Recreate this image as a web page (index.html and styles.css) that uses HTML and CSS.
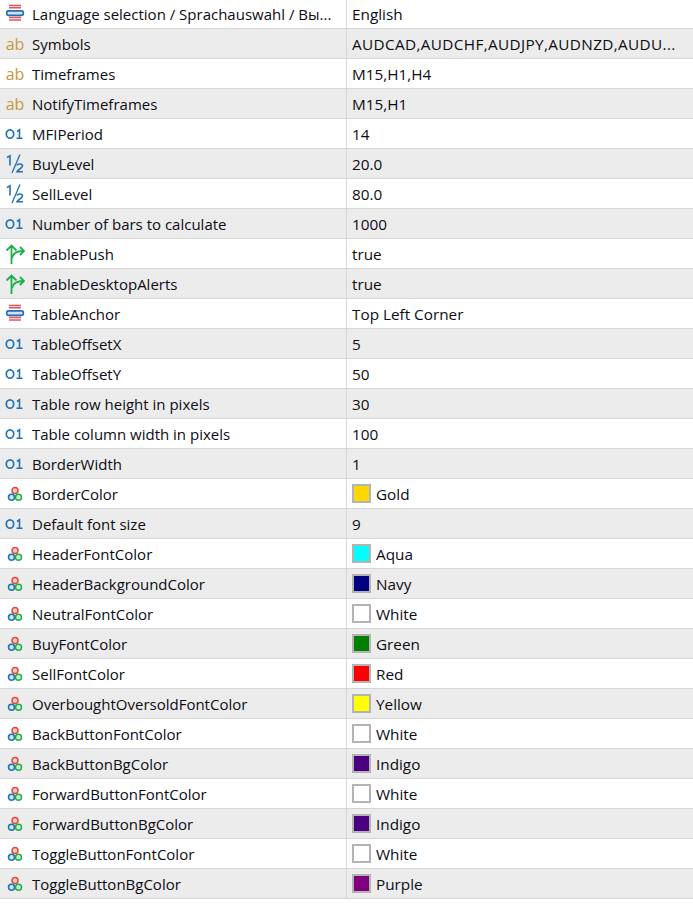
FILE: index.html
```html
<!DOCTYPE html>
<html lang="en">
<head>
<meta charset="utf-8">
<title>Inputs</title>
<link rel="stylesheet" href="styles.css">
</head>
<body>
<svg class="defs" width="0" height="0" aria-hidden="true">
<symbol id="i-enum" viewBox="0 0 20 20">
<path d="M4 1.500h12M4 3.800h12M4 13.500h12M4 16h12" stroke="#e4535c" stroke-width="1.400" fill="none"/>
<rect x="1.700" y="6.800" width="16.600" height="4.600" rx="1.800" fill="#cfe0f0" stroke="#1f6fb5" stroke-width="1.700"/>
</symbol>
<symbol id="i-int" viewBox="0 0 20 20">
<ellipse cx="5" cy="10" rx="3.700" ry="4.200" fill="none" stroke="#2272b4" stroke-width="1.700"/>
<path d="M12 7.500l2.500-1.700V14.200M11.500 14.200h6" fill="none" stroke="#2272b4" stroke-width="1.600"/>
</symbol>
<symbol id="i-dbl" viewBox="0 0 20 20">
<path d="M2 3.500l3-1.600V11.500" fill="none" stroke="#2272b4" stroke-width="1.600"/>
<path d="M15 .5L7 19" fill="none" stroke="#2272b4" stroke-width="1.300"/>
<path d="M12 11.500c.6-2 5.500-2 5.500 .6 0 2-3.800 2.800-5.500 5.600h6" fill="none" stroke="#2272b4" stroke-width="1.600"/>
</symbol>
<symbol id="i-bool" viewBox="0 0 20 20">
<path d="M6.500 20V1.500M1.500 6.500l5-5 5 5" fill="none" stroke="#1cb04a" stroke-width="1.800"/>
<path d="M7 14c1-4.500 4.500-7 11.500-7M15 3l4 4-4 4" fill="none" stroke="#1cb04a" stroke-width="1.800"/>
</symbol>
<symbol id="i-color" viewBox="0 0 20 20">
<circle cx="10" cy="6.500" r="3" fill="#f8cfc9" stroke="#e2483d" stroke-width="1.500"/>
<circle cx="6.500" cy="13.300" r="3" fill="#cfe3f5" stroke="#1f6fb5" stroke-width="1.500"/>
<circle cx="13.500" cy="13.300" r="3" fill="#cdeed6" stroke="#1cb04a" stroke-width="1.500"/>
</symbol>
</svg>
<main class="list">
<div class="row"><div class="name"><svg class="icon"><use href="#i-enum"/></svg><span>Language selection / Sprachauswahl / Вы...</span></div><div class="val">English</div></div>
<div class="row"><div class="name"><span class="ab">ab</span><span>Symbols</span></div><div class="val wide">AUDCAD,AUDCHF,AUDJPY,AUDNZD,AUDU...</div></div>
<div class="row"><div class="name"><span class="ab">ab</span><span>Timeframes</span></div><div class="val">M15,H1,H4</div></div>
<div class="row"><div class="name"><span class="ab">ab</span><span>NotifyTimeframes</span></div><div class="val">M15,H1</div></div>
<div class="row"><div class="name"><svg class="icon"><use href="#i-int"/></svg><span>MFIPeriod</span></div><div class="val">14</div></div>
<div class="row"><div class="name"><svg class="icon"><use href="#i-dbl"/></svg><span>BuyLevel</span></div><div class="val">20.0</div></div>
<div class="row"><div class="name"><svg class="icon"><use href="#i-dbl"/></svg><span>SellLevel</span></div><div class="val">80.0</div></div>
<div class="row"><div class="name"><svg class="icon"><use href="#i-int"/></svg><span>Number of bars to calculate</span></div><div class="val">1000</div></div>
<div class="row"><div class="name"><svg class="icon"><use href="#i-bool"/></svg><span>EnablePush</span></div><div class="val">true</div></div>
<div class="row"><div class="name"><svg class="icon"><use href="#i-bool"/></svg><span>EnableDesktopAlerts</span></div><div class="val">true</div></div>
<div class="row"><div class="name"><svg class="icon"><use href="#i-enum"/></svg><span>TableAnchor</span></div><div class="val">Top Left Corner</div></div>
<div class="row"><div class="name"><svg class="icon"><use href="#i-int"/></svg><span>TableOffsetX</span></div><div class="val">5</div></div>
<div class="row"><div class="name"><svg class="icon"><use href="#i-int"/></svg><span>TableOffsetY</span></div><div class="val">50</div></div>
<div class="row"><div class="name"><svg class="icon"><use href="#i-int"/></svg><span>Table row height in pixels</span></div><div class="val">30</div></div>
<div class="row"><div class="name"><svg class="icon"><use href="#i-int"/></svg><span>Table column width in pixels</span></div><div class="val">100</div></div>
<div class="row"><div class="name"><svg class="icon"><use href="#i-int"/></svg><span>BorderWidth</span></div><div class="val">1</div></div>
<div class="row"><div class="name"><svg class="icon"><use href="#i-color"/></svg><span>BorderColor</span></div><div class="val"><i class="sw gold"></i>Gold</div></div>
<div class="row"><div class="name"><svg class="icon"><use href="#i-int"/></svg><span>Default font size</span></div><div class="val">9</div></div>
<div class="row"><div class="name"><svg class="icon"><use href="#i-color"/></svg><span>HeaderFontColor</span></div><div class="val"><i class="sw aqua"></i>Aqua</div></div>
<div class="row"><div class="name"><svg class="icon"><use href="#i-color"/></svg><span>HeaderBackgroundColor</span></div><div class="val"><i class="sw navy"></i>Navy</div></div>
<div class="row"><div class="name"><svg class="icon"><use href="#i-color"/></svg><span>NeutralFontColor</span></div><div class="val"><i class="sw white"></i>White</div></div>
<div class="row"><div class="name"><svg class="icon"><use href="#i-color"/></svg><span>BuyFontColor</span></div><div class="val"><i class="sw green"></i>Green</div></div>
<div class="row"><div class="name"><svg class="icon"><use href="#i-color"/></svg><span>SellFontColor</span></div><div class="val"><i class="sw red"></i>Red</div></div>
<div class="row"><div class="name"><svg class="icon"><use href="#i-color"/></svg><span>OverboughtOversoldFontColor</span></div><div class="val"><i class="sw yellow"></i>Yellow</div></div>
<div class="row"><div class="name"><svg class="icon"><use href="#i-color"/></svg><span>BackButtonFontColor</span></div><div class="val"><i class="sw white"></i>White</div></div>
<div class="row"><div class="name"><svg class="icon"><use href="#i-color"/></svg><span>BackButtonBgColor</span></div><div class="val"><i class="sw indigo"></i>Indigo</div></div>
<div class="row"><div class="name"><svg class="icon"><use href="#i-color"/></svg><span>ForwardButtonFontColor</span></div><div class="val"><i class="sw white"></i>White</div></div>
<div class="row"><div class="name"><svg class="icon"><use href="#i-color"/></svg><span>ForwardButtonBgColor</span></div><div class="val"><i class="sw indigo"></i>Indigo</div></div>
<div class="row"><div class="name"><svg class="icon"><use href="#i-color"/></svg><span>ToggleButtonFontColor</span></div><div class="val"><i class="sw white"></i>White</div></div>
<div class="row"><div class="name"><svg class="icon"><use href="#i-color"/></svg><span>ToggleButtonBgColor</span></div><div class="val"><i class="sw purple"></i>Purple</div></div>
</main>
</body>
</html>
```
FILE: styles.css
```css
html, body {
  margin: 0;
  padding: 0;
  background: #fff;
}
body {
  font-family: "Open Sans", "Noto Sans", sans-serif;
  font-size: 15px;
  line-height: 20px;
  color: #0c0c14;
  overflow: hidden;
}
.defs {
  display: block;
  height: 0;
}
.list {
  display: flex;
  flex-direction: column;
}
.row {
  display: grid;
  grid-template-columns: 346px 1fr;
  height: 30px;
  flex: none;
  box-sizing: border-box;
  border-bottom: 1px solid #d6d6d6;
}
.row:first-child {
  height: 29px;
}
.row:nth-child(even) {
  background: #ececec;
}
.name, .val {
  display: flex;
  align-items: center;
  white-space: nowrap;
  overflow: hidden;
}
.name {
  padding-left: 5px;
}
.val {
  border-left: 1px solid #d6d6d6;
  padding-left: 5px;
  font-size: 15.3px;
}
.wide {
  letter-spacing: 0.36px;
}
.icon {
  width: 20px;
  height: 20px;
  margin-right: 7px;
  flex: none;
}
.ab {
  width: 20px;
  margin-right: 7px;
  flex: none;
  text-align: center;
  font-size: 16px;
  color: #c8963c;
}
.sw {
  width: 19px;
  height: 19px;
  box-sizing: border-box;
  border: 2px solid #b4b4b4;
  margin-right: 5px;
  flex: none;
}
.gold { background: #ffd700; }
.aqua { background: #00ffff; }
.navy { background: #000080; }
.white { background: #fff; }
.green { background: #008000; }
.red { background: #ff0000; }
.yellow { background: #ffff00; }
.indigo { background: #4b0082; }
.purple { background: #800080; }
```
